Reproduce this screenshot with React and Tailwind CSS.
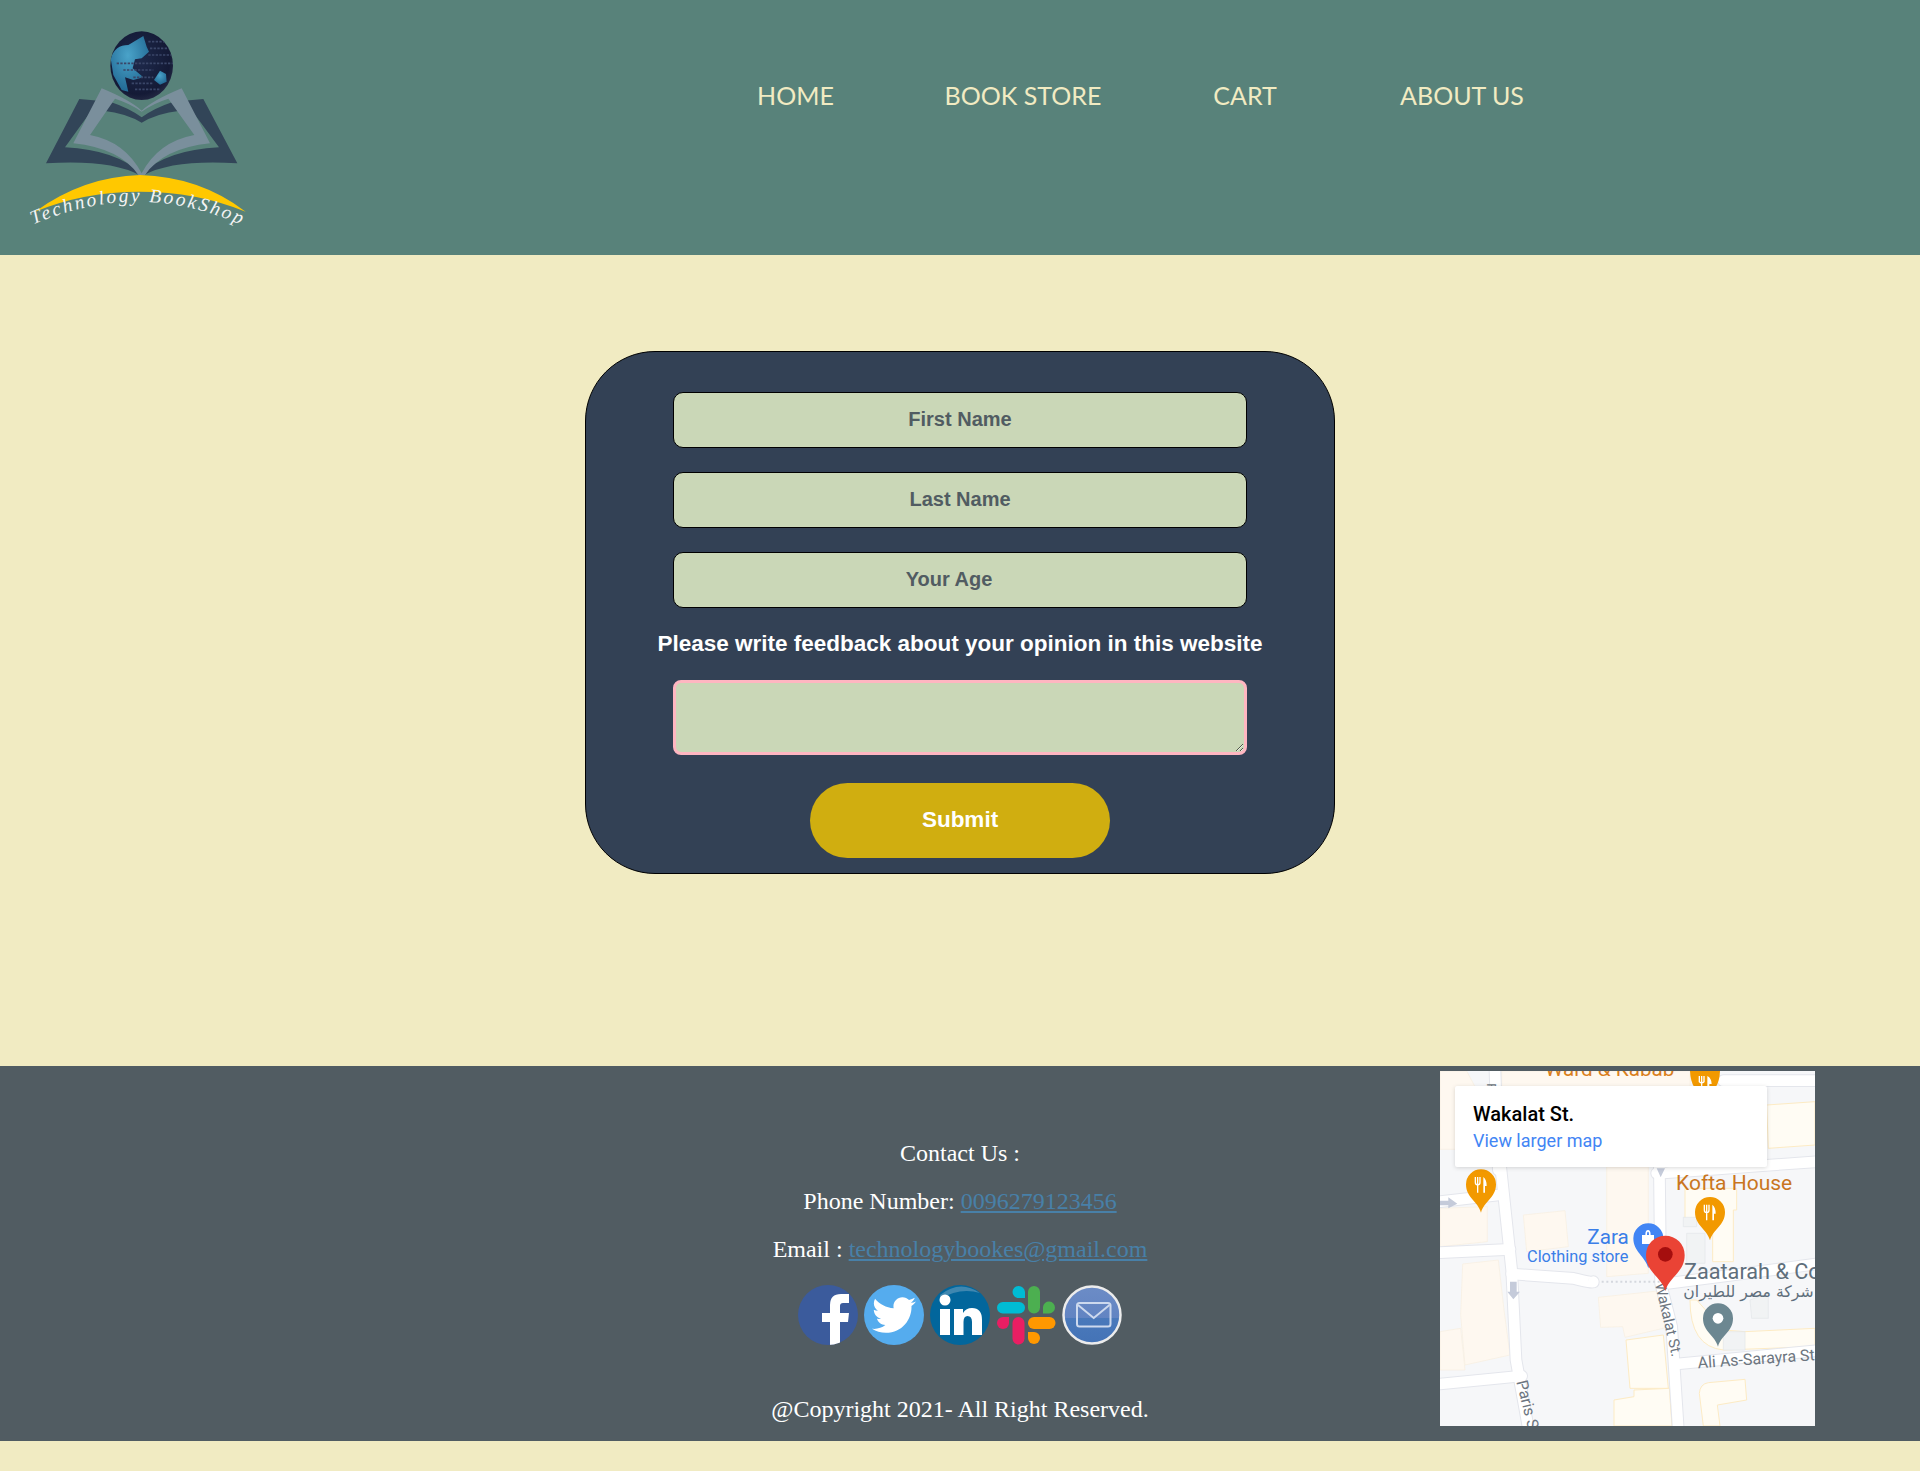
import React from "react";
import { FaTwitter } from "react-icons/fa";

function Logo() {
  return (
    <svg width="300" height="255" viewBox="0 0 900 765" className="shrink-0 block">
      <defs>
        <radialGradient id="globe" cx="0.45" cy="0.42" r="0.62">
          <stop offset="0" stopColor="#1e2a4c" />
          <stop offset="0.8" stopColor="#141a36" />
          <stop offset="1" stopColor="#252b45" />
        </radialGradient>
        <radialGradient id="land" cx="0.45" cy="0.35" r="0.7">
          <stop offset="0" stopColor="#4aa3c9" />
          <stop offset="1" stopColor="#1f6590" />
        </radialGradient>
        <clipPath id="gc"><ellipse cx="425" cy="197" rx="94" ry="103" /></clipPath>
        <path id="arcText" d="M100 674 Q 425 531 745 685" fill="none" />
      </defs>
      <path fillRule="evenodd" fill="#324558" d="M138 490 L238 297 L330 305 Q 390 325 425 352 Q 460 325 520 305 L610 297 L712 490 Q 520 478 432 525 L418 525 Q 330 478 138 490 Z M272 335 L195 442 Q 350 450 425 522 Q 500 450 657 442 L578 335 L540 332 Q 470 340 425 368 Q 380 340 310 332 Z" />
      <path fillRule="evenodd" fill="#7a8f9c" d="M305 265 Q 390 300 425 332 Q 460 300 545 265 L630 430 Q 490 445 435 525 L415 525 Q 360 445 220 430 Z M345 296 L270 405 Q 375 425 425 520 Q 475 425 583 405 L505 296 Q 460 310 425 335 Q 390 310 345 296 Z" />
      <path fill="#ffc800" d="M105 635 Q 250 530 420 525 Q 600 530 737 635 Q 590 575 420 575 Q 250 575 105 635 Z" />
      <text fill="#f4f4f4" fontFamily="'Liberation Serif', serif" fontStyle="italic" fontSize="58" letterSpacing="7">
        <textPath href="#arcText">Technology BookShop</textPath>
      </text>
      <ellipse cx="425" cy="197" rx="94" ry="103" fill="url(#globe)" />
      <g clipPath="url(#gc)">
        <path fill="url(#land)" d="M332 175 Q 345 135 385 135 L430 108 L440 140 L447 155 L425 175 L405 178 L398 205 L430 232 L400 240 L375 232 L385 275 L365 270 L340 225 Z" />
        <path fill="url(#land)" d="M462 240 L480 212 L498 222 L500 245 L480 254 Z" />
        <path fill="none" stroke="#3a4668" strokeWidth="5" strokeDasharray="7 4" d="M445 125 H505 M450 145 H515 M445 165 H518 M350 190 H520 M370 210 H460 M400 232 H460 M395 250 H460 M405 268 H480" />
      </g>
    </svg>
  );
}

function Facebook() {
  return (
    <svg width="60" height="60" viewBox="0 0 60 60">
      <defs><clipPath id="fbc"><circle cx="30" cy="30" r="30" /></clipPath></defs>
      <circle cx="30" cy="30" r="30" fill="#3b5b9c" />
      <path clipPath="url(#fbc)" fill="#fff" d="M32 60 V37 H24 V28 H32 V20 Q32 9 43 9 H51 V18 H45 Q42 18 42 21 V28 H51 L50 37 H42 V60 Z" />
    </svg>
  );
}

function Twitter() {
  return (
    <div className="w-[60px] h-[60px] rounded-full bg-[#55acee] flex items-center justify-center">
      <FaTwitter size={44} color="#fff" />
    </div>
  );
}

function Linkedin() {
  return (
    <svg width="60" height="60" viewBox="0 0 60 60">
      <defs><clipPath id="lic"><circle cx="30" cy="30" r="30" /></clipPath></defs>
      <circle cx="30" cy="30" r="30" fill="#02669c" />
      <path clipPath="url(#lic)" fill="#3f87b0" d="M10 10 Q 30 -6 50 8 Q 30 2 10 14 Z" />
      <circle cx="15" cy="15" r="5.5" fill="#fff" />
      <rect x="10" y="24" width="10" height="26" fill="#fff" />
      <path fill="#fff" d="M24 24 H33 V28 Q36 23 42 23 Q52 23 52 35 V50 H42 V37 Q42 31 37.5 31 Q33.5 31 33.5 37 V50 H24 Z" />
    </svg>
  );
}

function Slack() {
  return (
    <svg width="60" height="60" viewBox="0 0 60 60">
      <rect x="1" y="17" width="28" height="11.5" rx="5.75" fill="#00bcd4" />
      <path fill="#00bcd4" d="M22.5 1 A6.3 6.3 0 0 1 29 7 V13 H22.5 A6 6 0 0 1 22.5 1 Z" />
      <rect x="32" y="1" width="12" height="27.5" rx="6" fill="#4caf50" />
      <path fill="#4caf50" d="M47 28.5 V22 A6 6 0 1 1 53 28.5 Z" />
      <rect x="32" y="32" width="27.5" height="12" rx="6" fill="#ff9800" />
      <path fill="#ff9800" d="M32 47 H38 A6 6 0 1 1 32 53 Z" />
      <rect x="16.5" y="32" width="12" height="27.5" rx="6" fill="#e91e63" />
      <path fill="#e91e63" d="M13 32 V38 A6 6 0 1 1 7 32 Z" />
    </svg>
  );
}

function Mail() {
  return (
    <svg width="60" height="60" viewBox="0 0 60 60">
      <defs>
        <linearGradient id="mg" x1="0" y1="0" x2="0" y2="1">
          <stop offset="0" stopColor="#6c8cc6" />
          <stop offset="0.55" stopColor="#6284c2" />
          <stop offset="0.56" stopColor="#4a79bb" />
          <stop offset="1" stopColor="#4473b6" />
        </linearGradient>
      </defs>
      <circle cx="30" cy="30" r="28.5" fill="url(#mg)" stroke="#ececec" strokeWidth="2.5" />
      <rect x="15" y="18" width="33.5" height="23.5" rx="2.5" fill="none" stroke="#cdd9ee" strokeWidth="2" />
      <path d="M16 20 L31.7 33 L47.5 20" fill="none" stroke="#cdd9ee" strokeWidth="2" />
    </svg>
  );
}

function Pin({ x, y, r, h, color }) {
  return <path fill={color} d={`M${x - r} ${y} A${r} ${r} 0 1 1 ${x + r} ${y} C${x + r} ${y + r * 0.9} ${x + r * 0.2} ${y + h * 0.6} ${x} ${y + h} C${x - r * 0.2} ${y + h * 0.6} ${x - r} ${y + r * 0.9} ${x - r} ${y} Z`} />;
}

function FoodPin({ x, y }) {
  return (
    <g>
      <Pin x={x} y={y} r={45} h={85} color="#f29900" />
      <path stroke="#fff" strokeWidth="4" fill="none" d={`M${x - 17} ${y - 22} V${y - 6} Q${x - 17} ${y + 2} ${x - 10} ${y + 2} Q${x - 3} ${y + 2} ${x - 3} ${y - 6} V${y - 22} M${x - 10} ${y - 22} V${y + 25}`} />
      <path fill="#fff" d={`M${x + 7} ${y + 25} V${y - 22} Q${x + 17} ${y - 15} ${x + 17} ${y + 5} H${x + 12} V${y + 25} Z`} />
    </g>
  );
}

function MapView() {
  const road = [
    "M212 320 L245 630 L258 900 L296 1110",
    "M30 425 L205 405",
    "M30 578 L240 568",
    "M30 972 L275 948",
    "M245 642 L430 655 Q 490 670 490 665",
    "M688 310 L692 670 L725 800 L745 1110",
    "M680 340 L1160 305",
    "M700 672 L1160 612",
    "M740 912 L1160 872",
    "M880 62 L1160 62",
    "M195 33 L205 330",
  ];
  return (
    <div className="relative w-[375px] h-[355px] bg-[#f6f7f9] overflow-hidden">
      <svg width="375" height="355" viewBox="30 33 1125 1065" className="block">
        <g fill="#fef8f0" stroke="#f8eedf" strokeWidth="2">
          <path d="M30 33 H110 L135 80 V268 L30 268 Z" />
          <path d="M215 33 H780 V80 H215 Z" />
          <path d="M30 445 L172 440 V545 L30 560 Z" />
          <path d="M280 465 L405 452 L415 560 L290 575 Z" />
          <path d="M530 320 H655 V640 L530 650 Z" />
          <path d="M505 712 L692 692 L720 800 L585 832 L578 800 L512 802 Z" />
          <path d="M98 612 L205 600 L222 750 L240 885 L105 915 L92 765 Z" />
          <path d="M30 815 L92 805 L105 930 L30 930 Z" />
        </g>
        <g fill="#fffcf4" stroke="#fdebc4" strokeWidth="3">
          <path d="M588 840 L700 825 L715 985 L600 985 Z" />
          <path d="M552 1020 L612 1010 V990 L718 985 L726 1098 H552 Z" />
          <path d="M808 1000 Q 810 972 835 968 L945 958 L950 1020 L862 1035 L870 1098 H820 Z" />
          <path d="M1010 135 L1155 125 V255 L1015 265 Z" />
          <path d="M765 385 H920 V450 H910 V605 H848 V480 H765 Z" />
          <path d="M780 720 Q 780 860 880 870 L1155 860 V805 L945 815 L880 810 L800 720 Z" />
        </g>
        <g fill="#f1f3f4" stroke="#e3e5e9" strokeWidth="2">
          <path d="M760 472 H800 V500 H760 Z" />
          <path d="M770 520 H825 V610 H770 Z" />
          <path d="M880 815 H945 V870 H880 Z" />
          <path d="M960 720 L1015 700 V775 H965 Z" />
        </g>
        <g fill="none" stroke="#e4e6ec" strokeWidth="38" strokeLinecap="round">
          {road.map((d) => <path key={d} d={d} />)}
        </g>
        <g fill="none" stroke="#ffffff" strokeWidth="32" strokeLinecap="round">
          {road.map((d) => <path key={d} d={d} />)}
        </g>
        <path d="M515 665 H690" stroke="#d5d8de" strokeWidth="6" strokeDasharray="6 8" fill="none" />
        <path fill="#c5cbda" d="M240 665 H260 V695 H270 L250 718 L232 695 H240 Z M30 422 H55 V412 L82 431 L55 445 V436 H30 Z M680 325 H705 L692 352 Z" />
        <FoodPin x={153} y={373} />
        <FoodPin x={840} y={456} />
        <path fill="#f29900" d="M780 33 H870 Q 868 90 825 110 Q 782 90 780 33 Z" />
        <path stroke="#fff" strokeWidth="4" fill="none" d="M808 48 V65 Q815 72 822 65 V48 M815 48 V85" />
        <path fill="#fff" d="M832 85 V48 Q 845 55 845 72 H838 V85 Z" />
        <g fontFamily="Roboto, sans-serif">
          <text x="345" y="47" fontSize="62" fill="#d97f1d">Ward &amp; Kabab</text>
          <text x="738" y="390" fontSize="63" fill="#c9761f">Kofta House</text>
          <text x="472" y="553" fontSize="62" fill="#3a7ee8">Zara</text>
          <text x="291" y="606" fontSize="49" fill="#3a7ee8">Clothing store</text>
          <text x="762" y="658" fontSize="65" fill="#5f6f7c">Zaatarah &amp; Co</text>
          <text x="760" y="712" fontSize="47" fill="#5f6f7c" fontFamily="'DejaVu Sans', sans-serif">شركة مصر للطيران</text>
          <text x="0" y="0" fontSize="45" fill="#6d7680" transform="translate(675 672) rotate(77)">Wakalat St.</text>
          <text x="0" y="0" fontSize="48" fill="#6d7680" transform="translate(804 925) rotate(-4)">Ali As-Sarayra St</text>
          <text x="0" y="0" fontSize="48" fill="#6d7680" transform="translate(259 965) rotate(76)">Paris St</text>
          <text x="0" y="0" fontSize="40" fill="#6d7680" transform="translate(172 70) rotate(90)">P</text>
        </g>
        <Pin x={655} y={535} r={45} h={90} color="#4285f4" />
        <path fill="#fff" d="M636 525 H672 V552 H636 Z M646 525 Q 646 510 654 510 Q 662 510 662 525 H657 Q 657 515 654 515 Q 651 515 651 525 Z" />
        <Pin x={864} y={775} r={45} h={85} color="#6c8791" />
        <circle cx="864" cy="775" r="16" fill="#fff" />
        <Pin x={706} y={585} r={58} h={108} color="#ea4335" />
        <circle cx="706" cy="583" r="22" fill="#a50e0e" />
      </svg>
      <div className="absolute left-[15px] top-[15px] w-[312px] h-[81px] bg-white rounded-[2px] shadow-[0_1px_4px_rgba(0,0,0,0.15)] px-[18px] pt-[13px] font-['Roboto',sans-serif]">
        <div className="text-[20px] leading-[30px] font-medium text-black">Wakalat St.</div>
        <a className="block text-[18px] leading-[24px] text-[#4285f4]">View larger map</a>
      </div>
    </div>
  );
}

export default function App() {
  return (
    <div className="min-h-[1471px] bg-[#f1ebc2] font-['Liberation_Serif',serif]">
      <header className="h-[255px] bg-[#58827a] flex items-start">
        <Logo />
        <nav className="flex items-center mt-[78px] ml-[435px] text-[#f1ebc2] text-[25px] leading-[34px] font-['Comic_Sans_MS','Lato',cursive] text-center">
          <a className="block w-[121px]">HOME</a>
          <a className="block w-[200px] ml-[67px]">BOOK STORE</a>
          <a className="block w-[100px] ml-[72px]">CART</a>
          <a className="block w-[160px] ml-[87px]">ABOUT US</a>
        </nav>
      </header>

      <main className="h-[811px] flex justify-center items-start pt-[96px]">
        <form className="w-[750px] rounded-[70px] border border-black bg-[#334155] pt-[40px] pb-[15px] flex flex-col items-center font-['Liberation_Sans',sans-serif]">
          <input placeholder="First Name" className="block w-[574px] h-[56px] pb-[2px] rounded-[10px] border border-black bg-[#cad7b7] text-center text-[20px] font-bold placeholder:text-[#515c62] placeholder:opacity-100 outline-none" />
          <input placeholder="Last Name" className="block w-[574px] h-[56px] pb-[2px] mt-[24px] rounded-[10px] border border-black bg-[#cad7b7] text-center text-[20px] font-bold placeholder:text-[#515c62] placeholder:opacity-100 outline-none" />
          <input type="number" placeholder="Your Age" className="block w-[574px] h-[56px] pb-[2px] pr-[7px] mt-[24px] rounded-[10px] border border-black bg-[#cad7b7] text-center text-[20px] font-bold placeholder:text-[#515c62] placeholder:opacity-100 outline-none" />
          <label className="h-[72px] flex items-center text-[22.5px] font-bold text-white">Please write feedback about your opinion in this website</label>
          <textarea className="block w-[574px] h-[75px] rounded-[8px] border-[3px] border-[#ffb6c1] bg-[#cad7b7] outline-none" />
          <button type="button" className="block w-[300px] h-[75px] pb-[2px] mt-[28px] rounded-[38px] bg-[#d0ae10] text-white text-[22.5px] font-bold">Submit</button>
        </form>
      </main>

      <footer className="h-[375px] bg-[#515c62] grid grid-cols-[1fr_auto_1fr]">
        <div />
        <div className="pt-[63px] text-white text-[24px] leading-[48px] text-center">
          <p>Contact Us :</p>
          <p>Phone Number: <a className="text-[#4880a8] underline">0096279123456</a></p>
          <p>Email : <a className="text-[#4880a8] underline">technologybookes@gmail.com</a></p>
          <div className="flex justify-center gap-[6px] mt-[12px]">
            <Facebook />
            <Twitter />
            <Linkedin />
            <Slack />
            <Mail />
          </div>
          <p className="mt-[40px]">@Copyright 2021- All Right Reserved.</p>
        </div>
        <div className="flex justify-end pt-[5px] pr-[105px]">
          <div><MapView /></div>
        </div>
      </footer>
    </div>
  );
}
